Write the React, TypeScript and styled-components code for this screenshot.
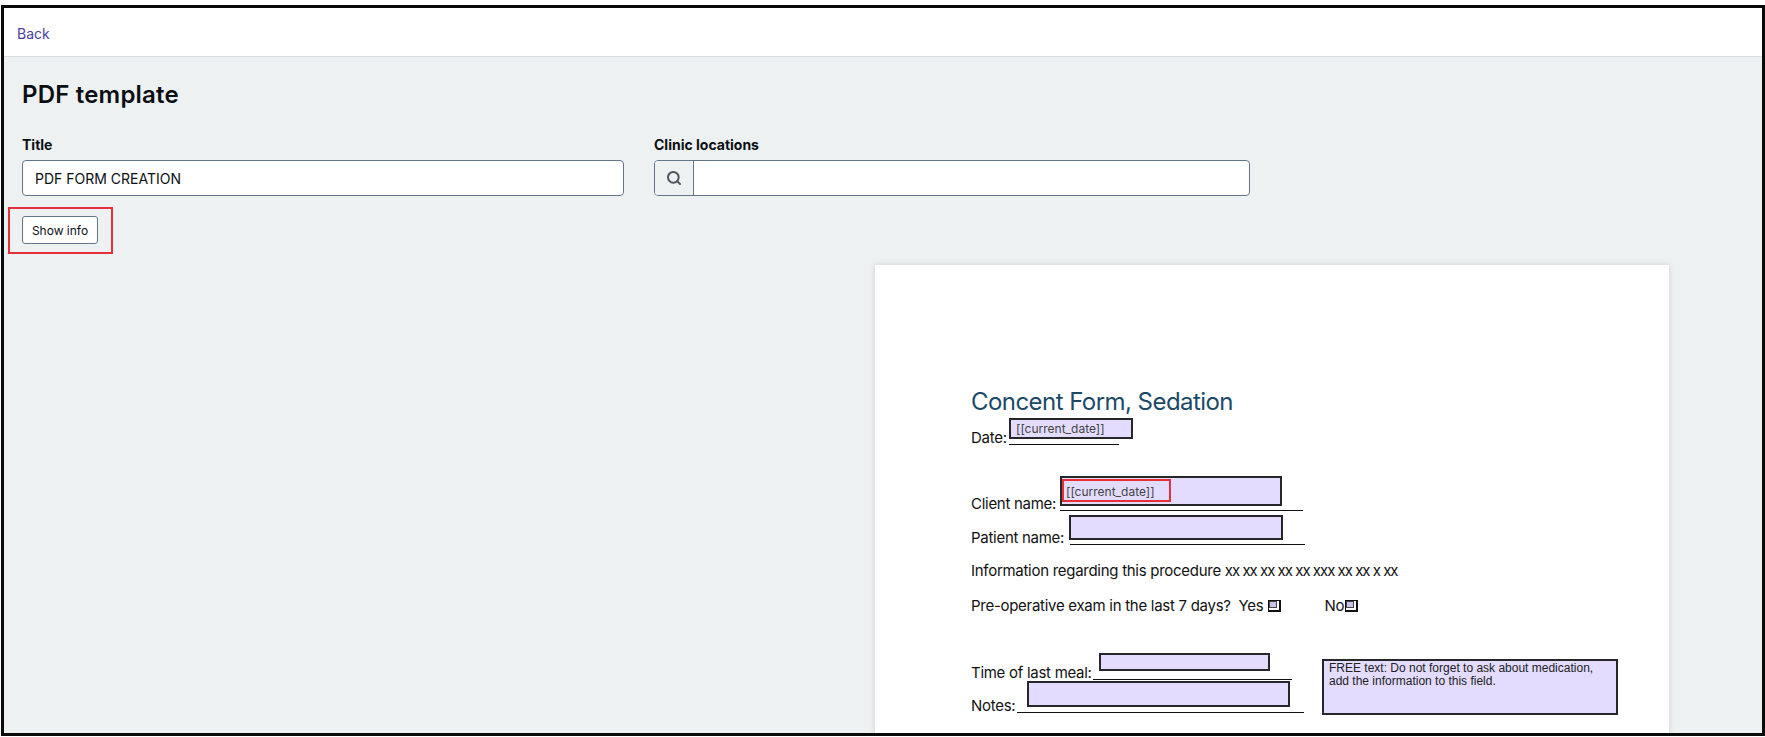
import React from "react";
import styled, { createGlobalStyle } from "styled-components";
import { Search } from "lucide-react";

const GlobalStyle = createGlobalStyle`
    html, body {
        margin: 0;
        height: 737px;
        background: #fff;
        overflow: hidden;
        font-family: Inter, "Liberation Sans", sans-serif;
    }
`;

const Frame = styled.div`
    box-sizing: border-box;
    margin: 5px 0 0 1px;
    width: 1764px;
    height: 731px;
    border: 3px solid #0a0a0a;
    background: #eef1f2;
    overflow: hidden;
`;

const Header = styled.header`
    box-sizing: border-box;
    height: 49px;
    padding: 3px 13px 0;
    display: flex;
    align-items: center;
    background: #fff;
    border-bottom: 1px solid #d9dddf;
`;

const BackLink = styled.a`
    color: #4a3f9f;
    font-size: 14px;
`;

const Main = styled.main`
    padding: 23px 0 0 18px;
`;

const Heading = styled.h1`
    margin: 0;
    font-size: 24px;
    line-height: 30px;
    font-weight: 600;
    letter-spacing: 0.2px;
    color: #0b0f14;
`;

const FieldRow = styled.div`
    margin-top: 25px;
    display: grid;
    grid-template-columns: 602px 596px;
    column-gap: 30px;
`;

const Label = styled.label`
    display: block;
    margin-bottom: 5px;
    font-size: 14px;
    line-height: 20px;
    font-weight: 700;
    color: #0b0f14;
`;

const TextInput = styled.input`
    box-sizing: border-box;
    width: 100%;
    height: 36px;
    padding: 0 12px;
    border: 1px solid #66768a;
    border-radius: 4px;
    background: #fff;
    font: 14px Inter, sans-serif;
    color: #0b0f14;
`;

const InputGroup = styled.div`
    box-sizing: border-box;
    display: flex;
    height: 36px;
    border: 1px solid #66768a;
    border-radius: 4px;
    overflow: hidden;
    background: #fff;
`;

const Addon = styled.span`
    width: 38px;
    display: flex;
    align-items: center;
    justify-content: center;
    background: #eef1f2;
    border-right: 1px solid #66768a;
    color: #4f5560;
`;

const ButtonSlot = styled.div`
    position: relative;
    margin-top: 20px;
    width: 76px;
`;

const InfoButton = styled.button`
    box-sizing: border-box;
    width: 76px;
    height: 28px;
    padding: 0;
    border: 1px solid #66768a;
    border-radius: 3px;
    background: #fff;
    font: 12px Inter, sans-serif;
    color: #0b0f14;
`;

const Highlight = styled.span<{ $top: number; $left: number; $width: number; $height: number }>`
    position: absolute;
    box-sizing: border-box;
    top: ${(p) => p.$top}px;
    left: ${(p) => p.$left}px;
    width: ${(p) => p.$width}px;
    height: ${(p) => p.$height}px;
    border: 2px solid #e5303a;
`;

const Page = styled.section`
    position: relative;
    box-sizing: border-box;
    margin: 21px 0 0 853px;
    width: 794px;
    height: 480px;
    padding: 122px 0 0 96px;
    background: #fff;
    box-shadow: 0 0 6px rgba(0, 0, 0, 0.14);
`;

const PageTitle = styled.h2`
    margin: 0;
    font-size: 24px;
    line-height: 30px;
    font-weight: 400;
    letter-spacing: -0.55px;
    color: #1b4a68;
`;

const Line = styled.div<{ $gap: number }>`
    margin-top: ${(p) => p.$gap}px;
    height: 24px;
    display: flex;
    align-items: baseline;
    font-size: 15px;
    letter-spacing: -0.28px;
    line-height: 24px;
    color: #111;
    white-space: pre;
`;

const LineText = styled.span<{ $width: number }>`
    width: ${(p) => p.$width}px;
`;

const Crosses = styled.span`
    letter-spacing: -1px;
`;

const NoLabel = styled.span`
    margin-left: 43px;
`;

const Blank = styled.span<{ $width: number }>`
    align-self: flex-end;
    width: ${(p) => p.$width}px;
    margin-bottom: 5px;
    border-bottom: 1px solid #111;
`;

const Tick = styled.span<{ $left: number }>`
    position: relative;
    box-sizing: border-box;
    margin-left: ${(p) => p.$left}px;
    align-self: center;
    width: 13px;
    height: 12px;
    border: 1px solid #111;
    border-width: 1px 2px 2px 1px;
    background: #fff;

    &::before {
        content: "";
        position: absolute;
        box-sizing: border-box;
        top: 0;
        left: 0;
        width: 8px;
        height: 7px;
        background: #c9c3e6;
        border: 1px solid #444;
    }
`;

const FormField = styled.div<{ $x: number; $y: number; $w: number; $h: number }>`
    position: absolute;
    box-sizing: border-box;
    left: ${(p) => p.$x}px;
    top: ${(p) => p.$y}px;
    width: ${(p) => p.$w}px;
    height: ${(p) => p.$h}px;
    background: #e3dcff;
    border: 2px solid #26262b;
`;

const DateTag = styled.span<{ $left: number; $top: number }>`
    position: absolute;
    left: ${(p) => p.$left}px;
    top: ${(p) => p.$top}px;
    font-size: 12px;
    line-height: 16px;
    color: #444;
`;

const FreeText = styled.p`
    margin: 0;
    padding: 1px 5px 0;
    font: 12px/13px "Liberation Sans", Arial, sans-serif;
    color: #222;
`;

const App = () => {
    return (
        <>
            <GlobalStyle />
            <Frame>
                <Header>
                    <BackLink>Back</BackLink>
                </Header>
                <Main>
                    <Heading>PDF template</Heading>
                    <FieldRow>
                        <div>
                            <Label>Title</Label>
                            <TextInput defaultValue="PDF FORM CREATION" />
                        </div>
                        <div>
                            <Label>Clinic locations</Label>
                            <InputGroup>
                                <Addon>
                                    <Search size={16} strokeWidth={3} />
                                </Addon>
                            </InputGroup>
                        </div>
                    </FieldRow>
                    <ButtonSlot>
                        <InfoButton>Show info</InfoButton>
                        <Highlight $top={-9} $left={-14} $width={105} $height={47} />
                    </ButtonSlot>
                    <Page>
                        <PageTitle>Concent Form, Sedation</PageTitle>
                        <Line $gap={9}>
                            <LineText $width={38}>Date:</LineText>
                            <Blank $width={110} />
                        </Line>
                        <Line $gap={42}>
                            <LineText $width={89}>Client name:</LineText>
                            <Blank $width={243} />
                        </Line>
                        <Line $gap={10}>
                            <LineText $width={99}>Patient name:</LineText>
                            <Blank $width={235} />
                        </Line>
                        <Line $gap={9}>
                            Information regarding this procedure <Crosses>xx xx xx xx xx xxx xx xx x xx</Crosses>
                        </Line>
                        <Line $gap={11}>
                            Pre-operative exam in the last 7 days?{"  "}Yes
                            <Tick $left={5} />
                            <NoLabel>No</NoLabel>
                            <Tick $left={1} />
                        </Line>
                        <Line $gap={43}>
                            <LineText $width={122}>Time of last meal:</LineText>
                            <Blank $width={199} />
                        </Line>
                        <Line $gap={9}>
                            <LineText $width={46}>Notes:</LineText>
                            <Blank $width={287} />
                        </Line>

                        <FormField $x={134} $y={153} $w={124} $h={21}>
                            <DateTag $left={5} $top={1}>[[current_date]]</DateTag>
                        </FormField>
                        <FormField $x={185} $y={211} $w={222} $h={30}>
                            <DateTag $left={4} $top={6}>[[current_date]]</DateTag>
                            <Highlight $top={1} $left={0} $width={109} $height={23} />
                        </FormField>
                        <FormField $x={194} $y={250} $w={214} $h={25} />
                        <FormField $x={224} $y={388} $w={171} $h={18} />
                        <FormField $x={152} $y={416} $w={263} $h={26} />
                        <FormField $x={447} $y={394} $w={296} $h={56}>
                            <FreeText>
                                FREE text: Do not forget to ask about medication,
                                <br />
                                add the information to this field.
                            </FreeText>
                        </FormField>
                    </Page>
                </Main>
            </Frame>
        </>
    );
};

export default App;
